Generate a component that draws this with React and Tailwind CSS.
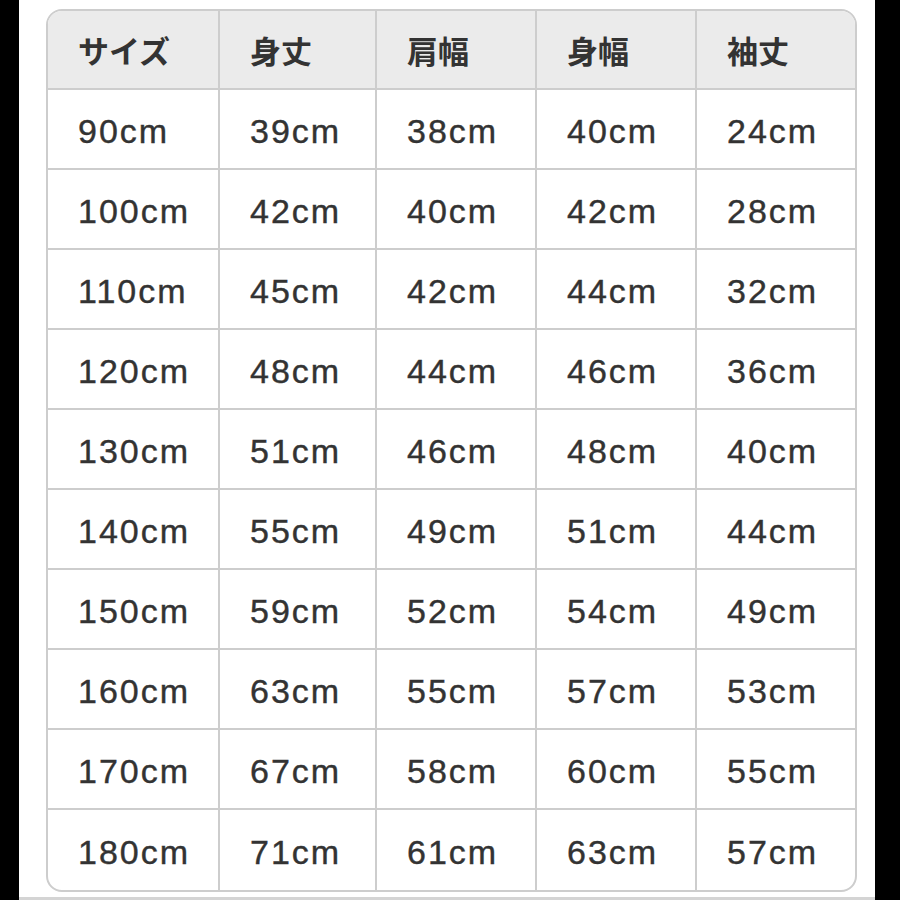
const headers = ["サイズ", "身丈", "肩幅", "身幅", "袖丈"];

const rows = [
  ["90cm", "39cm", "38cm", "40cm", "24cm"],
  ["100cm", "42cm", "40cm", "42cm", "28cm"],
  ["110cm", "45cm", "42cm", "44cm", "32cm"],
  ["120cm", "48cm", "44cm", "46cm", "36cm"],
  ["130cm", "51cm", "46cm", "48cm", "40cm"],
  ["140cm", "55cm", "49cm", "51cm", "44cm"],
  ["150cm", "59cm", "52cm", "54cm", "49cm"],
  ["160cm", "63cm", "55cm", "57cm", "53cm"],
  ["170cm", "67cm", "58cm", "60cm", "55cm"],
  ["180cm", "71cm", "61cm", "63cm", "57cm"],
];

const cols = "grid grid-cols-[172px_157px_160px_160px_1fr]";

export default function App() {
  return (
    <div className="flex h-[900px] w-[900px] bg-black">
      <div className="ml-[19px] flex h-[900px] w-[856px] flex-col border-b-[3px] border-[#d4d4d4] bg-white pl-[27px] pt-[9px]">
        <div className="w-[811px] overflow-hidden rounded-[16px] border-2 border-[#cdcdcd] text-[#333333]">
          <div
            className={`${cols} h-[79px] border-b-2 border-[#cdcdcd] bg-[#ebebeb] font-bold text-[31px]`}
            style={{ fontFamily: '"Noto Sans CJK JP", sans-serif' }}
          >
            {headers.map((h, i) => (
              <div
                key={h}
                className={`flex items-center pl-[30px] pt-[2px] ${i < 4 ? "border-r-2 border-[#cdcdcd]" : ""}`}
              >
                {h}
              </div>
            ))}
          </div>
          {rows.map((r, ri) => (
            <div
              key={r[0]}
              className={`${cols} h-[80px] ${ri < rows.length - 1 ? "border-b-2 border-[#cdcdcd]" : ""} text-[34px] tracking-[2px]`}
              style={{ fontFamily: '"Liberation Sans", Arial, sans-serif', WebkitTextStroke: "0.4px #333333" }}
            >
              {r.map((c, ci) => (
                <div
                  key={ci}
                  className={`flex items-center pl-[30px] pt-[4px] ${ci < 4 ? "border-r-2 border-[#cdcdcd]" : ""}`}
                >
                  {c}
                </div>
              ))}
            </div>
          ))}
        </div>
      </div>
    </div>
  );
}
